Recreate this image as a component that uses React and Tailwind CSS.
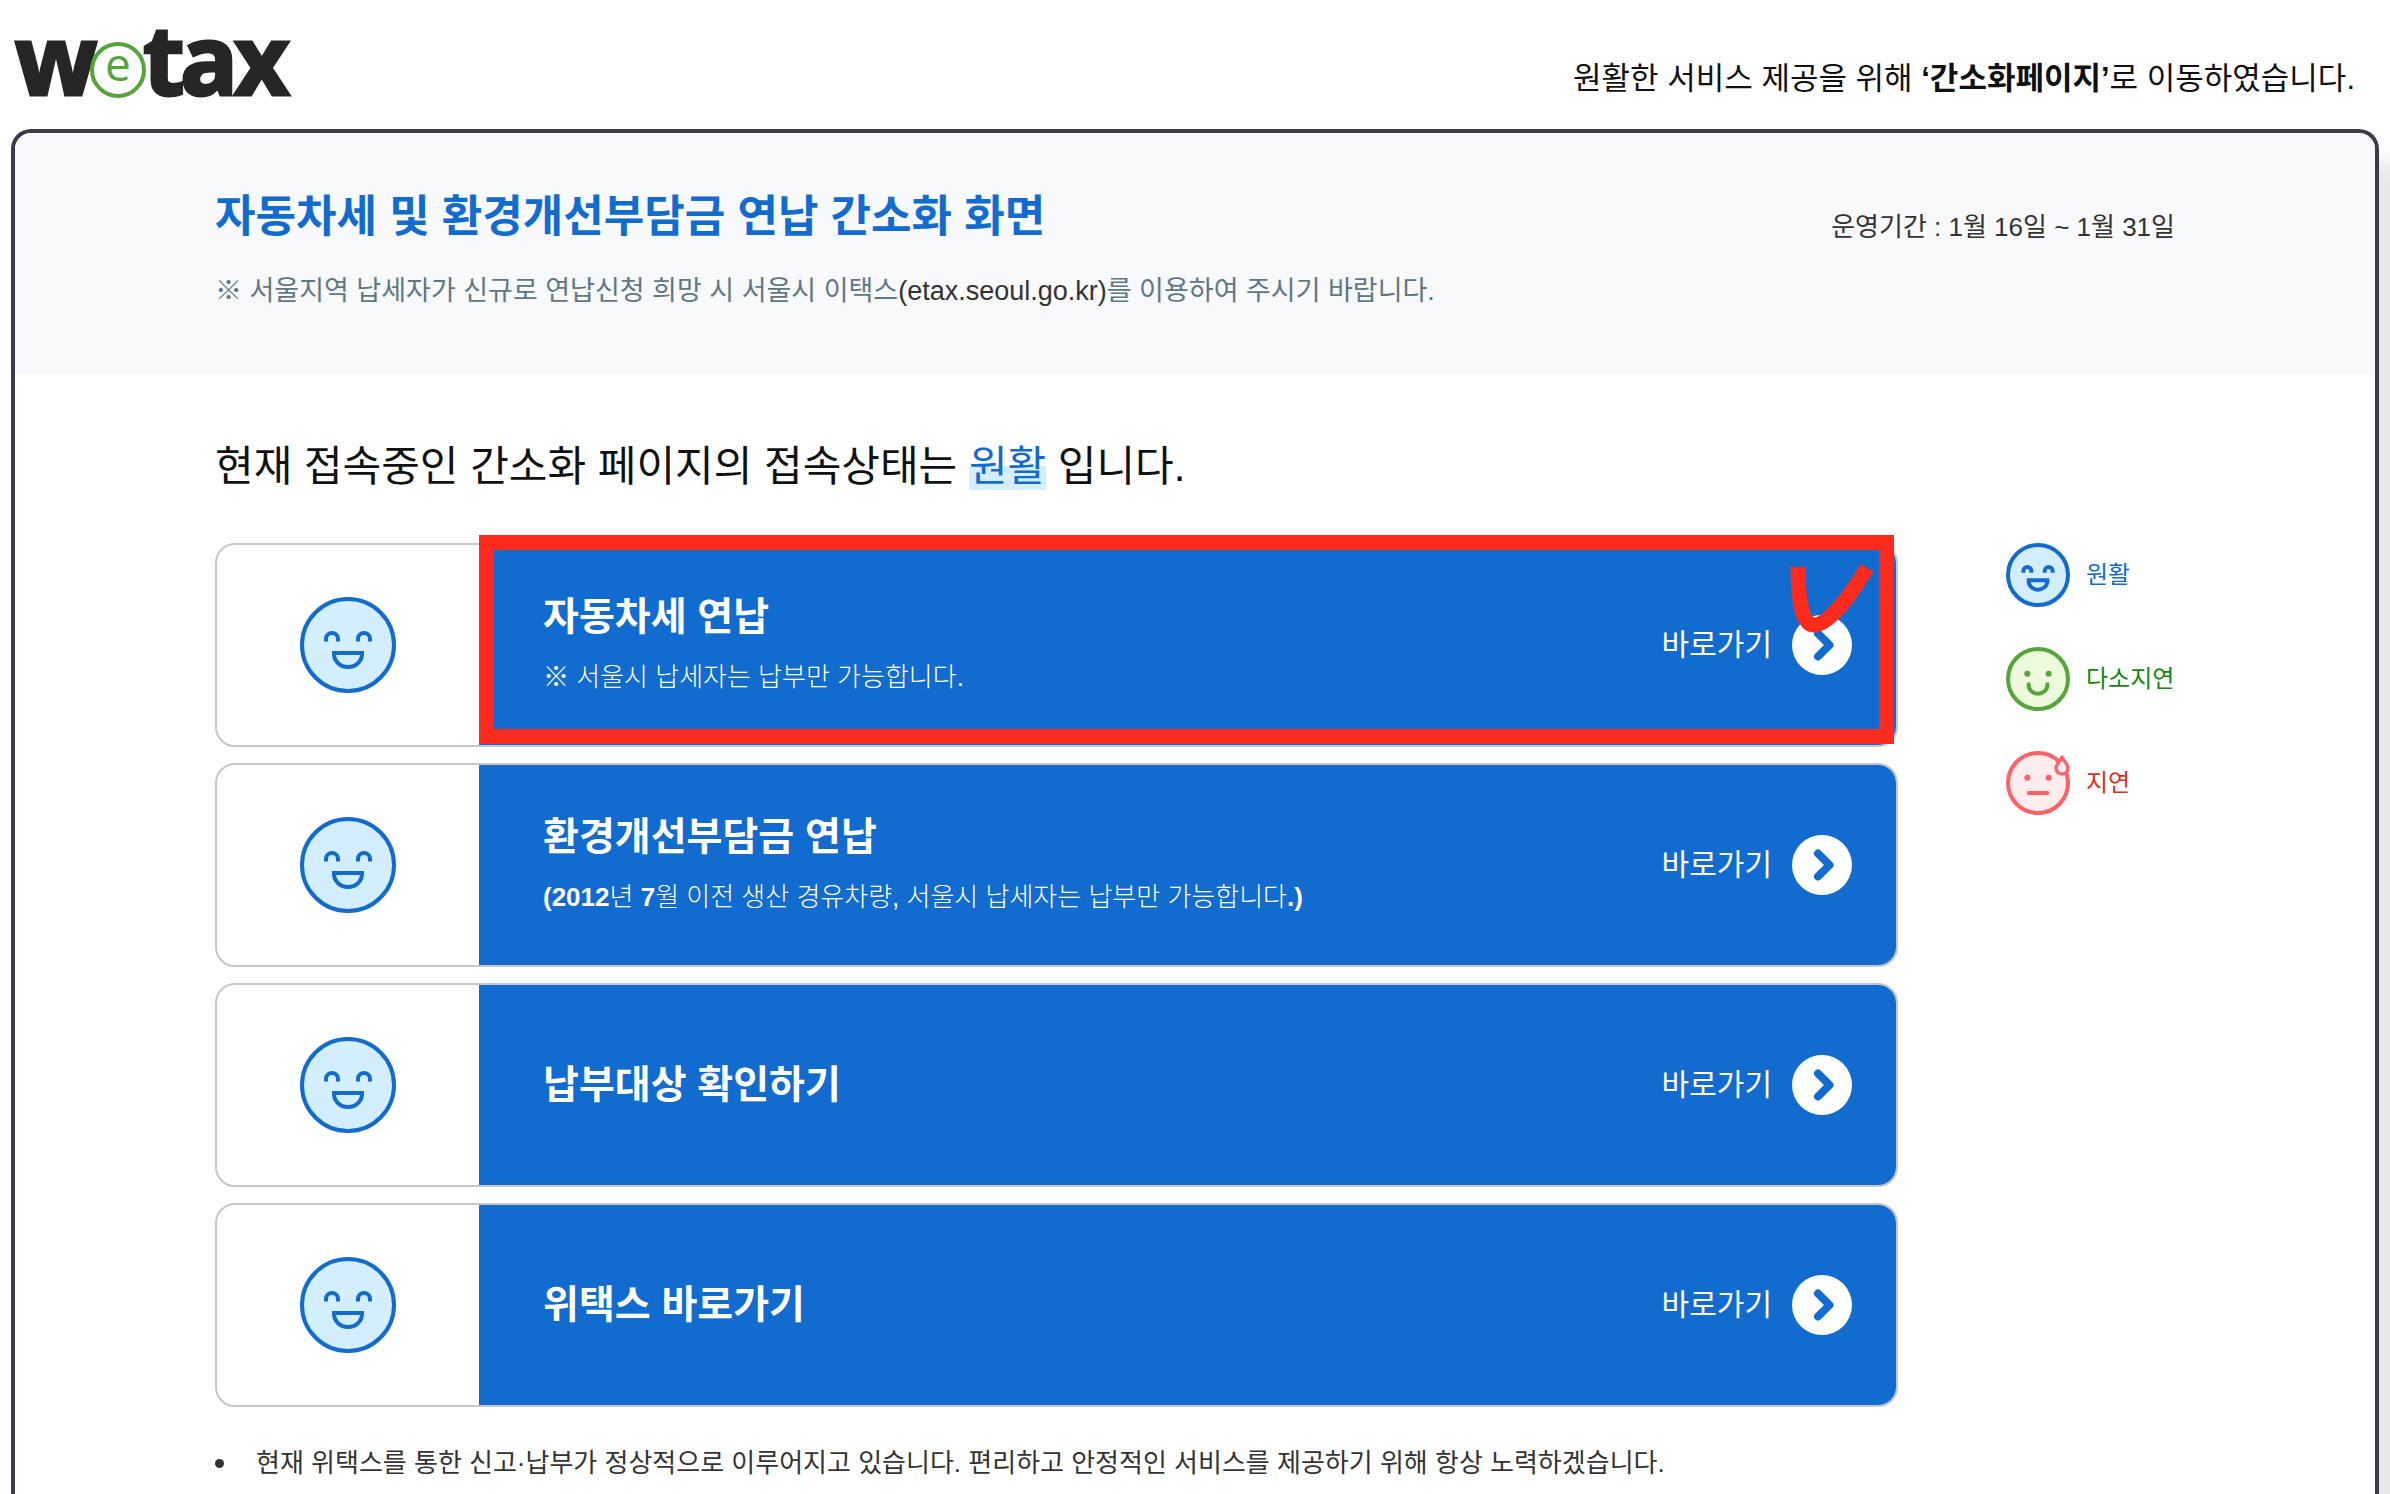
const CARDS = [
  { title: '자동차세 연납', note: '※ 서울시 납세자는 납부만 가능합니다.', marked: true },
  {
    title: '환경개선부담금 연납',
    note: (
      <>
        <b className="font-bold">(2012</b>년 <b className="font-bold">7</b>월 이전 생산 경유차량, 서울시 납세자는 납부만 가능합니다<b className="font-bold">.)</b>
      </>
    ),
  },
  { title: '납부대상 확인하기' },
  { title: '위택스 바로가기' },
];

const LEGEND = [
  { label: '원활', mood: 'good', color: 'text-[#126bce]' },
  { label: '다소지연', mood: 'slow', color: 'text-[#118811]' },
  { label: '지연', mood: 'bad', color: 'text-[#e22d1f]' },
];

const MOOD_COLORS = {
  good: { line: '#126bce', fill: '#d3efff' },
  slow: { line: '#55a53a', fill: '#edfbdc' },
  bad: { line: '#ff6166', fill: '#ffedee' },
};

function Face({ mood, stroke, className }) {
  const { line, fill } = MOOD_COLORS[mood];
  return (
    <svg viewBox="0 0 96 96" className={className} fill="none" stroke={line} strokeWidth={stroke} strokeLinecap="round" strokeLinejoin="round" aria-hidden="true">
      <circle cx="48" cy="48" r={48 - stroke / 2} fill={fill} />
      {mood === 'good' && (
        <g strokeLinecap="butt" strokeLinejoin="miter">
          <path d="M26 44.500v-2.500a6 6 0 0 1 12 0v2.500M58 44.500v-2.500a6 6 0 0 1 12 0v2.500" />
          <path d="M34 56h28v1a14 13 0 0 1-28 0z" />
        </g>
      )}
      {mood !== 'good' && (
        <g fill={line} stroke="none">
          <circle cx="32" cy="40" r="4.500" />
          <circle cx="64" cy="40" r="4.500" />
        </g>
      )}
      {mood === 'slow' && <path d="M34 56v1a14 13 0 0 0 28 0v-1" />}
      {mood === 'bad' && (
        <g>
          <path d="M34 63h28" />
          <path d="M84 9c-2 6-9 10-9 17a9 8.500 0 0 0 18 0c0-7-7-11-9-17z" strokeWidth="5" fill={fill} />
        </g>
      )}
    </svg>
  );
}

function Logo() {
  return (
    <svg viewBox="0 0 300 129" className="h-[129px] w-[300px]" role="img" aria-label="wetax">
      <g fontFamily="'Open Sans', 'Noto Sans', sans-serif" fontWeight="700" fontSize="96" fill="#262626" stroke="#262626" strokeWidth="3">
        <text x="15" y="95">w</text>
        <text x="143" y="95">t</text>
        <text x="180" y="95">a</text>
        <text x="234" y="95">x</text>
      </g>
      <circle cx="118" cy="70" r="26" fill="#fff" stroke="#55a53a" strokeWidth="4" />
      <text x="118" y="81" textAnchor="middle" fontFamily="'Open Sans', sans-serif" fontWeight="400" fontSize="46" fill="#55a53a">e</text>
    </svg>
  );
}

function Card({ title, note, marked }) {
  return (
    <a href="#" className="flex h-[204px] rounded-[20px] border-2 border-[#c7c7c7] bg-white">
      <span className="flex w-[262px] shrink-0 items-center justify-center">
        <Face mood="good" stroke={4} className="size-24" />
      </span>
      <span className="relative flex flex-1 items-center justify-between rounded-r-[18px] bg-[#126bce] pr-11 pl-16 text-white">
        <span className="flex flex-col gap-4">
          <strong className="text-[39px] leading-[48px] font-bold">{title}</strong>
          {note && <span className="text-[26px] leading-[40px] font-light">{note}</span>}
        </span>
        <span className="flex items-center gap-5 text-[30px] leading-[40px]">
          바로가기
          <svg viewBox="0 0 60 60" className="size-[60px]" aria-hidden="true">
            <circle cx="30" cy="30" r="30" fill="#fff" />
            <path d="M26 18.500 37.500 30 26 41.500" fill="none" stroke="#126bce" strokeWidth="8" strokeLinecap="round" strokeLinejoin="round" />
          </svg>
        </span>
        {marked && (
          <span className="pointer-events-none absolute -top-2.5 right-0.5 bottom-px left-0 border-[15px] border-[#fd2b1e]">
            <svg viewBox="0 0 90 80" className="absolute top-3.5 right-0 h-20 w-[90px]" fill="none" stroke="#fd2b1e" strokeWidth="15" aria-hidden="true">
              <path d="M9 3C9 40 14 61 25 61C37 61 57 39 78 4" />
            </svg>
          </span>
        )}
      </span>
    </a>
  );
}

export default function App() {
  return (
    <div className="flex min-h-screen flex-col overflow-hidden bg-white font-['Liberation_Sans','Noto_Sans_CJK_KR',sans-serif] text-[#111]">
      <header className="flex h-[129px] items-start justify-between pr-[35px]">
        <Logo />
        <p className="pt-[55px] text-[31px] leading-[48px]">
          원활한 서비스 제공을 위해 <strong>‘간소화페이지’</strong>로 이동하였습니다.
        </p>
      </header>

      <main className="mx-[11px] flex-1 rounded-t-[20px] border-4 border-b-0 border-[#3b3b4d] bg-white shadow-[20px_30px_20px_rgba(0,0,0,0.1)]">
        <section className="flex h-[242px] items-start justify-between rounded-t-2xl bg-[#f8f9fb] px-[200px] pt-[52px]">
          <div className="flex flex-col gap-[22px]">
            <h1 className="text-[44px] leading-[64px] font-bold text-[#126bce]">자동차세 및 환경개선부담금 연납 간소화 화면</h1>
            <p className="text-[27px] leading-[40px] text-[#5f7783]">
              ※ 서울지역 납세자가 신규로 연납신청 희망 시 서울시 이택스
              <a href="#" className="text-[#333]">(etax.seoul.go.kr)</a>를 이용하여 주시기 바랍니다.
            </p>
          </div>
          <p className="pt-[22px] text-[26px] leading-[40px] text-[#333]">운영기간 : 1월 16일 ~ 1월 31일</p>
        </section>

        <section className="px-[200px] pt-[60px]">
          <h2 className="text-[42px] leading-[64px]">
            현재 접속중인 간소화 페이지의 접속상태는{' '}
            <em className="bg-linear-to-t from-[#d3efff] from-50% to-transparent to-50% text-[#126bce] not-italic">원활</em> 입니다.
          </h2>
          <div className="mt-11 flex items-start gap-[108px]">
            <div className="flex flex-1 flex-col gap-4">
              {CARDS.map((card) => (
                <Card key={card.title} {...card} />
              ))}
            </div>
            <ul className="flex w-[169px] flex-col gap-10">
              {LEGEND.map(({ label, mood, color }) => (
                <li key={label} className="flex items-center gap-4 whitespace-nowrap">
                  <Face mood={mood} stroke={6} className="size-16 shrink-0" />
                  <span className={`text-[24px] leading-[32px] ${color}`}>{label}</span>
                </li>
              ))}
            </ul>
          </div>
          <ul className="mt-9">
            <li className="flex items-center gap-8 text-[26px] leading-[40px] text-[#333]">
              <span className="size-[9px] rounded-full bg-[#333]" />
              현재 위택스를 통한 신고·납부가 정상적으로 이루어지고 있습니다. 편리하고 안정적인 서비스를 제공하기 위해 항상 노력하겠습니다.
            </li>
          </ul>
        </section>
      </main>
    </div>
  );
}
